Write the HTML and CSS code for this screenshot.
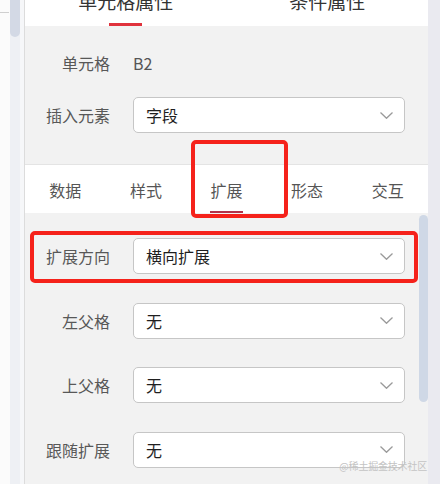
FILE: index.html
```html
<!DOCTYPE html>
<html lang="zh-CN">
<head>
<meta charset="utf-8">
<title>单元格属性</title>
<link rel="stylesheet" href="styles.css">
</head>
<body>
<div class="screen">
  <div class="left-strip"><div class="left-line"></div></div>
  <div class="outer-scroll"><div class="outer-thumb"></div></div>
  <div class="gutter"></div>
  <div class="panel">
    <div class="head-tabs">
      <div class="htab"><span class="htab-text">单元格属性</span><i class="htab-bar"></i></div>
      <div class="htab"><span class="htab-text">条件属性</span></div>
    </div>
    <div class="section basic">
      <div class="form">
        <div class="label">单元格</div>
        <div class="value">B2</div>
        <div class="label">插入元素</div>
        <div class="select"><span>字段</span><svg class="chev" viewBox="0 0 13 7"><path d="M0.5 0.5 L6.5 6.3 L12.5 0.5"/></svg></div>
      </div>
    </div>
    <div class="sub-tabs">
      <div class="stab"><span>数据</span></div>
      <div class="stab"><span>样式</span></div>
      <div class="stab active"><span>扩展</span><i class="stab-bar"></i></div>
      <div class="stab"><span>形态</span></div>
      <div class="stab"><span>交互</span></div>
    </div>
    <div class="section ext">
      <div class="form ext-form">
        <div class="label">扩展方向</div>
        <div class="select"><span>横向扩展</span><svg class="chev" viewBox="0 0 13 7"><path d="M0.5 0.5 L6.5 6.3 L12.5 0.5"/></svg></div>
        <div class="label">左父格</div>
        <div class="select"><span>无</span><svg class="chev" viewBox="0 0 13 7"><path d="M0.5 0.5 L6.5 6.3 L12.5 0.5"/></svg></div>
        <div class="label">上父格</div>
        <div class="select"><span>无</span><svg class="chev" viewBox="0 0 13 7"><path d="M0.5 0.5 L6.5 6.3 L12.5 0.5"/></svg></div>
        <div class="label">跟随扩展</div>
        <div class="select"><span>无</span><svg class="chev" viewBox="0 0 13 7"><path d="M0.5 0.5 L6.5 6.3 L12.5 0.5"/></svg></div>
      </div>
      <div class="inner-scroll"><div class="inner-thumb"></div></div>
    </div>
    <div class="mark">@稀土掘金技术社区</div>
    <div class="anno anno-tab"></div>
    <div class="anno anno-row"></div>
  </div>
  <div class="right-strip"></div>
</div>
</body>
</html>
```

FILE: styles.css
```css
* { box-sizing: border-box; }
html, body {
  margin: 0;
  padding: 0;
  width: 440px;
  height: 484px;
  overflow: hidden;
  background: #ffffff;
  font-family: "Noto Sans CJK SC", "Noto Sans", sans-serif;
}
.screen {
  display: flex;
  width: 440px;
  height: 484px;
}
.left-strip {
  width: 10px;
  background: #fbfbfb;
  padding-top: 12px;
}
.left-line {
  height: 1px;
  width: 9px;
  background: #cfcfcf;
}
.outer-scroll {
  width: 10px;
  background: #eef0f4;
}
.outer-thumb {
  height: 37px;
  background: #d3d9e5;
  border-radius: 0 0 5px 5px;
}
.gutter {
  width: 4px;
  background: #f6f7f9;
}
.panel {
  position: relative;
  width: 404px;
  border-left: 1px solid #dcdcdc;
  display: flex;
  flex-direction: column;
  background: #f2f2f2;
}
.right-strip {
  width: 12px;
  background: #eaeaf0;
}

/* top tabs */
.head-tabs {
  height: 26px;
  background: #ffffff;
  display: flex;
  overflow: hidden;
}
.htab {
  flex: 1;
  display: flex;
  flex-direction: column;
  align-items: center;
}
.htab-text {
  font-size: 19px;
  line-height: 19px;
  margin-top: -9px;
  color: #333333;
}
.htab-bar {
  display: block;
  width: 33px;
  height: 3px;
  margin-top: 13px;
  background: #e0323c;
}

/* sections */
.section.basic {
  padding: 19px 23px 31px 0;
  border-bottom: 1px solid #e4e4e4;
}
.form {
  display: grid;
  grid-template-columns: 85px 1fr;
  column-gap: 23px;
  row-gap: 16px;
  grid-auto-rows: 36px;
  align-items: center;
}
.label {
  text-align: right;
  font-size: 16px;
  color: #585858;
  line-height: 22px;
}
.value {
  font-size: 16px;
  color: #555555;
  line-height: 22px;
}
.select {
  height: 36px;
  background: #ffffff;
  border: 1px solid #c6c6c6;
  border-radius: 5px;
  display: flex;
  align-items: center;
  justify-content: space-between;
  padding: 0 11px 0 12px;
  font-size: 16px;
  color: #1f1f1f;
}
.chev {
  width: 13px;
  height: 7px;
  fill: none;
  stroke: #9a9a9a;
  stroke-width: 1.3;
}

/* sub tabs */
.sub-tabs {
  height: 48px;
  background: #ffffff;
  display: flex;
}
.stab {
  flex: 1;
  display: flex;
  flex-direction: column;
  align-items: center;
  padding-top: 14px;
  font-size: 16px;
  line-height: 22px;
  color: #555555;
}
.stab-bar {
  display: block;
  width: 33px;
  height: 2px;
  margin-top: 10px;
  background: #b3324a;
}

.section.ext {
  flex: 1;
  display: flex;
}
.ext-form {
  flex: 1;
  padding: 25px 14px 0 0;
  row-gap: 28.5px;
  align-content: start;
}
.inner-scroll {
  width: 9px;
  padding-top: 2px;
}
.inner-thumb {
  height: 187px;
  background: #cfd8e6;
  border-radius: 5px;
}

.mark {
  position: absolute;
  right: 1px;
  top: 459px;
  font-size: 10px;
  line-height: 14px;
  color: #c4c4c4;
  letter-spacing: -0.2px;
}
.anno {
  position: absolute;
  border: 4px solid #f5221b;
  border-radius: 5px;
}
.anno-tab {
  left: 166px;
  top: 140px;
  width: 97px;
  height: 78px;
}
.anno-row {
  left: 5px;
  top: 231px;
  width: 388px;
  height: 52px;
}
```
